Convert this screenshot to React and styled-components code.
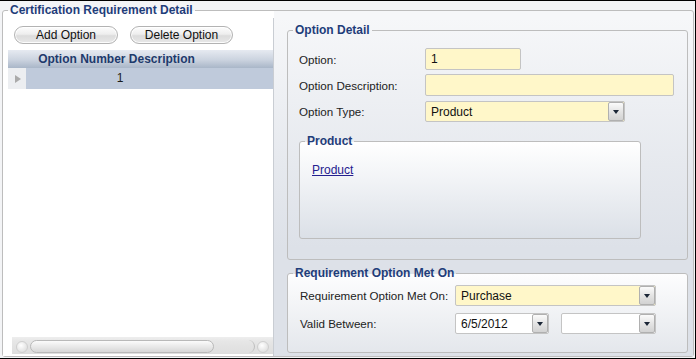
import React from 'react';
import styled, { createGlobalStyle } from 'styled-components';

const GlobalStyle = createGlobalStyle`
  html, body {
    margin: 0;
    padding: 0;
  }
  body {
    font-family: "Liberation Sans", Arial, sans-serif;
    font-size: 12px;
    color: #1c1c1c;
  }
  * {
    box-sizing: border-box;
  }
`;

const Screen = styled.div`
  width: 696px;
  height: 359px;
  display: flex;
  padding: 1px 1px 1px 2px;
  background: #f3f4f6;
  border-top: 1px solid #000;
  border-right: 1px solid #000;
  border-bottom: 1px solid #000;
`;

const Group = styled.fieldset`
  margin: 0;
  padding: 0;
  min-width: 0;
  border: 1px solid ${p => p.$border || '#bdbdbd'};
  border-radius: 3px;
`;

const Legend = styled.legend`
  margin-left: 5px;
  padding: 0 2px;
  font-weight: bold;
  font-size: 12px;
  line-height: 16px;
  color: #1f3d7a;
`;

const OuterGroup = styled(Group)`
  flex: 1;
  display: grid;
  grid-template-columns: 271px 1fr;
  background: linear-gradient(to right, #fff 271px, #f6f7f9 271px);
`;

const LeftPane = styled.div`
  display: flex;
  flex-direction: column;
  padding: 8px 0 2px 0;
  background: #fff;
  border-right: 1px solid #c9cdd3;
`;

const ButtonBar = styled.div`
  display: flex;
  gap: 12px;
  padding-left: 11px;
`;

const PillButton = styled.button`
  width: ${p => p.$w}px;
  height: 18px;
  padding: 0;
  border: 1px solid #b3b3b3;
  border-radius: 9px;
  background: linear-gradient(#fdfdfd, #eeeeee 45%, #dcdcdc 55%, #e8e8e8);
  box-shadow: inset 0 0 0 1px rgba(255, 255, 255, 0.85);
  font-family: "Liberation Sans", Arial, sans-serif;
  font-size: 12px;
  line-height: 16px;
  color: #111;
`;

const Grid = styled.div`
  flex: 1;
  display: flex;
  flex-direction: column;
  margin: 6px 0 0 5px;
  background: #fff;
`;

const GridHeader = styled.div`
  display: flex;
  height: 18px;
  background: linear-gradient(#e6eaf1, #cbd3df 55%, #a9b6c8);
`;

const IndicatorCell = styled.div`
  width: 18px;
  flex: none;
  display: flex;
  align-items: center;
  padding-left: 7px;
  background: ${p => (p.$header ? 'transparent' : '#eceef1')};
`;

const Arrow = styled.span`
  width: 0;
  height: 0;
  border-left: 6px solid #aaaaaa;
  border-top: 4.5px solid transparent;
  border-bottom: 4.5px solid transparent;
`;

const HeaderCell = styled.div`
  width: 181px;
  text-align: center;
  font-weight: bold;
  line-height: 18px;
  color: #1e3a6c;
`;

const GridRow = styled.div`
  display: flex;
  height: 21px;
  background: #bfcadb;
`;

const RowCell = styled.div`
  width: 188px;
  text-align: center;
  line-height: 21px;
`;

const GridBody = styled.div`
  flex: 1;
`;

const HScroll = styled.div`
  height: 17px;
  margin-left: 4px;
  display: flex;
  align-items: flex-end;
  padding: 0 2px 1px 2px;
  background: linear-gradient(#eeeeee, #e6e6e6 25%, #dedede);
`;

const ScrollKnob = styled.div`
  width: 12px;
  height: 12px;
  margin: 0 2px;
  border-radius: 50%;
  border: 1px solid #cfcfcf;
  background: radial-gradient(circle at 40% 35%, #ffffff, #d6d6d6);
`;

const ScrollThumb = styled.div`
  width: 184px;
  height: 13px;
  border: 1px solid #b9b9b9;
  border-radius: 7px;
  background: linear-gradient(#fbfbfb, #e9e9e9 50%, #d7d7d7);
`;

const ScrollGap = styled.div`
  flex: 1;
  height: 13px;
  border-right: 1px solid #bdbdbd;
  border-radius: 0 7px 7px 0;
`;

const RightPane = styled.div`
  display: flex;
  flex-direction: column;
  gap: 5px;
  padding: 4px 5px 3px 13px;
  background: linear-gradient(#f6f7f9, #dde1e8 68%, #dde1e8);
`;

const DetailGroup = styled(Group)`
  flex: 1;
`;

const DetailBody = styled.div`
  display: flex;
  flex-direction: column;
  gap: 4px;
  padding: 10px 0 0 11px;
`;

const FieldRow = styled.div`
  display: flex;
  align-items: center;
  margin-top: ${p => p.$mt || 0}px;
`;

const Label = styled.div`
  width: ${p => p.$w}px;
  flex: none;
  font-size: 11.6px;
  color: #222;
`;

const TextBox = styled.div`
  width: ${p => p.$w}px;
  height: ${p => p.$h || 21}px;
  display: flex;
  align-items: center;
  padding-left: ${p => p.$pad || 5}px;
  border: 1px solid #c4c4c4;
  border-radius: 2px;
  background: ${p => (p.$plain ? '#fff' : '#fff7c9')};
  color: #111;
`;

const BoxText = styled.span`
  flex: 1;
`;

const DropButton = styled.div`
  width: 16px;
  align-self: stretch;
  display: flex;
  align-items: center;
  justify-content: center;
  border: 1px solid #b0b0b0;
  border-radius: 2px;
  background: linear-gradient(#fbfbfb, #e4e4e4 50%, #d2d2d2);
`;

const DropArrow = styled.span`
  width: 0;
  height: 0;
  border-top: 4px solid #1b2636;
  border-left: 3.5px solid transparent;
  border-right: 3.5px solid transparent;
`;

const ProductGroup = styled(Group)`
  width: 342px;
  height: 106px;
  margin-top: 7px;
  background: linear-gradient(#ffffff, #f1f3f6 40%, #dbe0e7);
`;

const ProductBody = styled.div`
  padding: 14px 0 0 12px;
`;

const ProductLink = styled.a`
  color: #24208f;
  text-decoration: underline;
  line-height: 14px;
`;

const RequirementGroup = styled(Group)`
  height: 88px;
  flex: none;
  background: linear-gradient(#fdfdfe, #eef0f3 60%, #e4e7ec);
`;

const RequirementBody = styled.div`
  display: flex;
  flex-direction: column;
  gap: 7px;
  padding: 4px 0 0 12px;
`;

const DatePair = styled.div`
  display: flex;
  gap: 12px;
`;

function Combo({ width, value, plain }) {
  return (
    <TextBox $w={width} $plain={plain}>
      <BoxText>{value}</BoxText>
      <DropButton>
        <DropArrow />
      </DropButton>
    </TextBox>
  );
}

export default function App() {
  return (
    <>
      <GlobalStyle />
      <Screen>
        <OuterGroup>
          <Legend>Certification Requirement Detail</Legend>
          <LeftPane>
            <ButtonBar>
              <PillButton $w={104}>Add Option</PillButton>
              <PillButton $w={103}>Delete Option</PillButton>
            </ButtonBar>
            <Grid>
              <GridHeader>
                <IndicatorCell $header />
                <HeaderCell>Option Number Description</HeaderCell>
              </GridHeader>
              <GridRow>
                <IndicatorCell>
                  <Arrow />
                </IndicatorCell>
                <RowCell>1</RowCell>
              </GridRow>
              <GridBody />
              <HScroll>
                <ScrollKnob />
                <ScrollThumb />
                <ScrollGap />
                <ScrollKnob />
              </HScroll>
            </Grid>
          </LeftPane>
          <RightPane>
            <DetailGroup>
              <Legend>Option Detail</Legend>
              <DetailBody>
                <FieldRow>
                  <Label $w={126}>Option:</Label>
                  <TextBox $w={96} $h={22}>1</TextBox>
                </FieldRow>
                <FieldRow>
                  <Label $w={126}>Option Description:</Label>
                  <TextBox $w={249} $h={22} />
                </FieldRow>
                <FieldRow $mt={1}>
                  <Label $w={126}>Option Type:</Label>
                  <Combo width={200} value="Product" />
                </FieldRow>
                <ProductGroup>
                  <Legend>Product</Legend>
                  <ProductBody>
                    <ProductLink href="#">Product</ProductLink>
                  </ProductBody>
                </ProductGroup>
              </DetailBody>
            </DetailGroup>
            <RequirementGroup>
              <Legend>Requirement Option Met On</Legend>
              <RequirementBody>
                <FieldRow>
                  <Label $w={155}>Requirement Option Met On:</Label>
                  <Combo width={201} value="Purchase" />
                </FieldRow>
                <FieldRow>
                  <Label $w={155}>Valid Between:</Label>
                  <DatePair>
                    <Combo width={94} value="6/5/2012" plain />
                    <Combo width={95} value="" plain />
                  </DatePair>
                </FieldRow>
              </RequirementBody>
            </RequirementGroup>
          </RightPane>
        </OuterGroup>
      </Screen>
    </>
  );
}
